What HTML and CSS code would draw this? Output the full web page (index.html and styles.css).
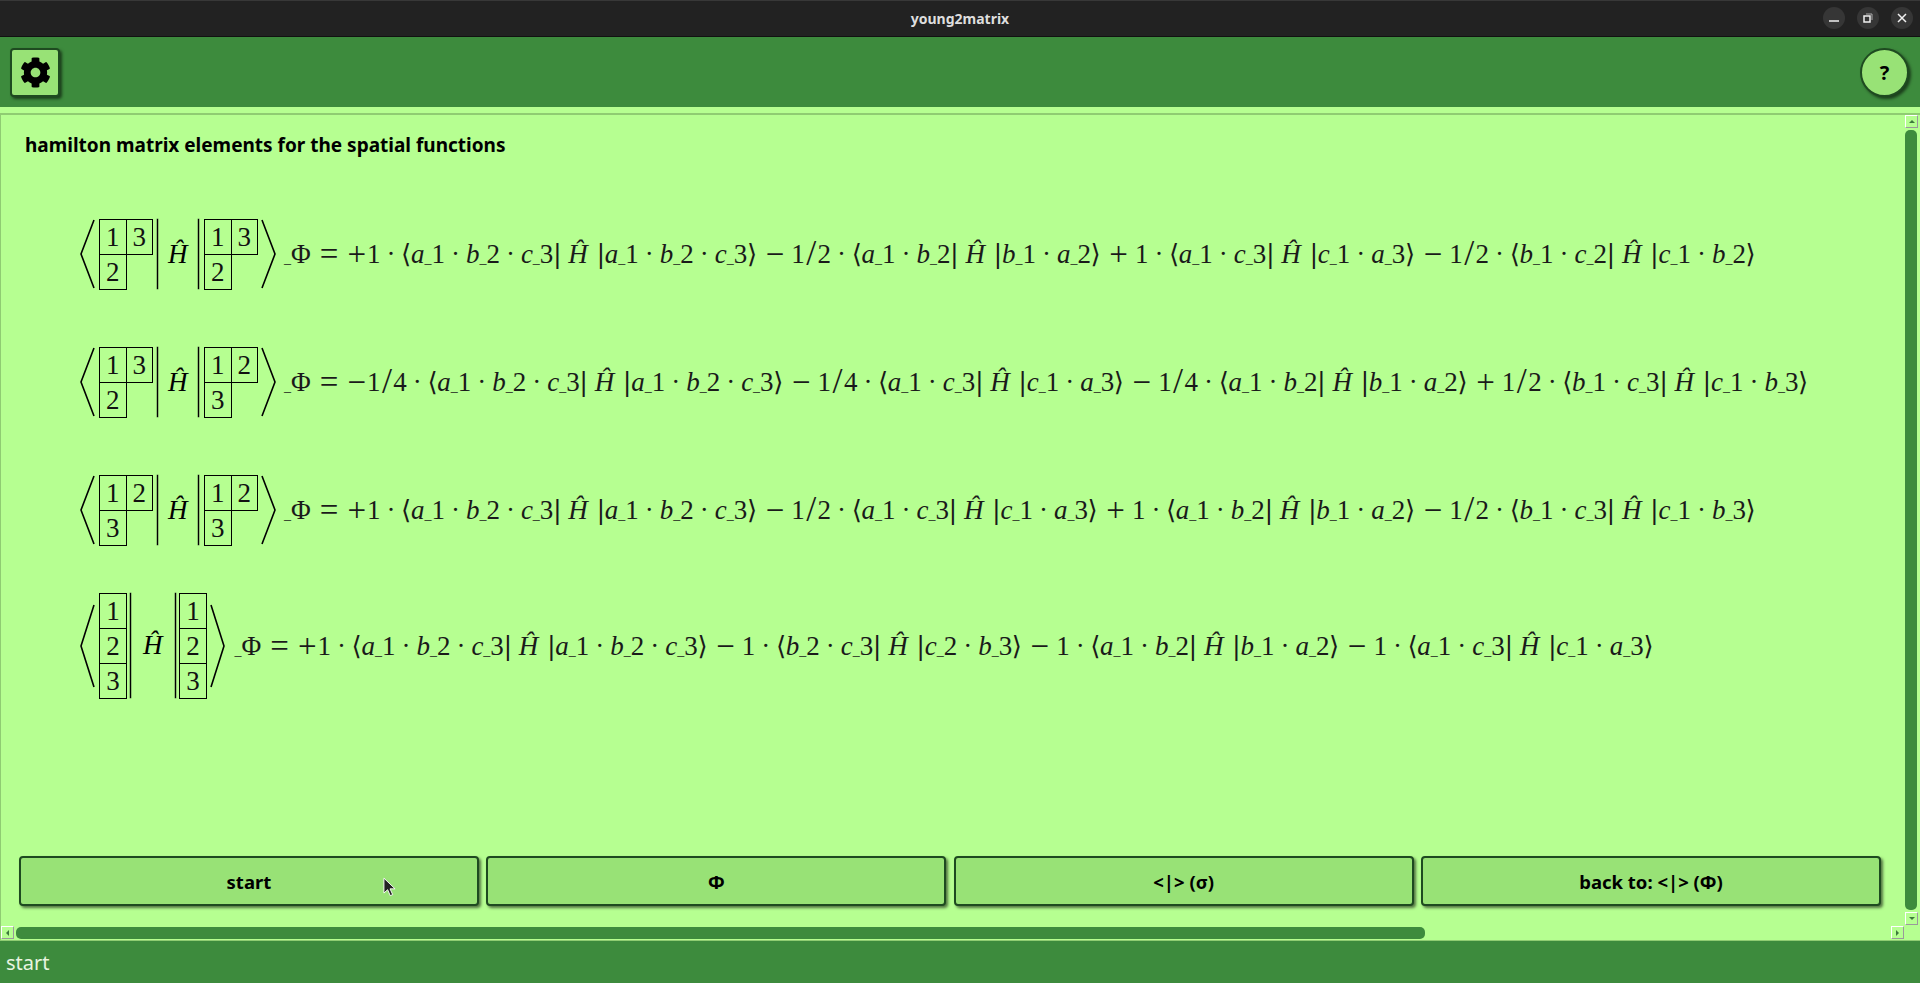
FILE: index.html
```html
<!DOCTYPE html>
<html lang="en">
<head>
<meta charset="utf-8">
<title>young2matrix</title>
<link rel="stylesheet" href="styles.css">
</head>
<body>
<header class="titlebar">
  <span class="app-title">young2matrix</span>
  <div class="win-btns">
    <span class="win-btn"><svg viewBox="0 0 22 22"><path d="M6 14h10" /></svg></span>
    <span class="win-btn"><svg viewBox="0 0 22 22"><rect x="7" y="9" width="6" height="6"/><path class="dim" d="M9 7h6v6"/></svg></span>
    <span class="win-btn"><svg viewBox="0 0 22 22"><path d="M7 7l8 8M15 7l-8 8"/></svg></span>
  </div>
</header>
<div class="toolbar">
  <button class="tool-btn" aria-label="settings"><svg viewBox="0 0 512 512"><path d="M487.4 315.7l-42.6-24.6c4.3-23.2 4.3-47 0-70.2l42.6-24.6c4.9-2.8 7.1-8.6 5.5-14-11.1-35.6-30-67.8-54.7-94.6-3.8-4.1-10-5.1-14.8-2.3L380.8 110c-17.9-15.4-38.5-27.3-60.8-35.1V25.8c0-5.6-3.9-10.5-9.4-11.7-36.7-8.2-74.3-7.8-109.2 0-5.5 1.2-9.4 6.1-9.4 11.7V75c-22.2 7.9-42.8 19.8-60.8 35.1L88.7 85.5c-4.9-2.8-11-1.9-14.8 2.3-24.7 26.7-43.6 58.9-54.7 94.6-1.7 5.4.6 11.2 5.5 14L67.3 221c-4.3 23.2-4.3 47 0 70.2l-42.6 24.6c-4.9 2.8-7.1 8.6-5.5 14 11.1 35.6 30 67.8 54.7 94.6 3.8 4.1 10 5.1 14.8 2.3l42.6-24.6c17.9 15.4 38.5 27.3 60.8 35.1v49.2c0 5.6 3.9 10.5 9.4 11.7 36.7 8.2 74.3 7.8 109.2 0 5.5-1.2 9.4-6.1 9.4-11.7v-49.2c22.2-7.9 42.8-19.8 60.8-35.1l42.6 24.6c4.9 2.8 11 1.9 14.8-2.3 24.7-26.7 43.6-58.9 54.7-94.6 1.5-5.5-.7-11.3-5.6-14.1zM256 336c-44.1 0-80-35.9-80-80s35.9-80 80-80 80 35.9 80 80-35.9 80-80 80z"/></svg></button>
  <button class="help-btn">?</button>
</div>
<main class="panel">
  <div class="view">
    <h1 class="heading">hamilton matrix elements for the spatial functions</h1>

    <div class="eq">
      <svg class="ang" viewBox="0 0 16 70" preserveAspectRatio="none"><path d="M15 1L2 35L15 69"/></svg>
      <div class="tab"><span>1</span><span>3</span><span>2</span></div>
      <span class="bar"></span>
      <i class="big-h">Ĥ</i>
      <span class="bar"></span>
      <div class="tab"><span>1</span><span>3</span><span>2</span></div>
      <svg class="ang" viewBox="0 0 16 70" preserveAspectRatio="none"><path d="M1 1L14 35L1 69"/></svg>
      <p class="math"><u>_</u>Φ<span class="rel">=</span><span class="op lead">+</span>1<span class="dot">·</span><span class="br">⟨</span><i>a</i><u>_</u>1<span class="dot">·</span><i>b</i><u>_</u>2<span class="dot">·</span><i>c</i><u>_</u>3<span class="br">|</span><i class="h">Ĥ</i><span class="br">|</span><i>a</i><u>_</u>1<span class="dot">·</span><i>b</i><u>_</u>2<span class="dot">·</span><i>c</i><u>_</u>3<span class="br">⟩</span><span class="op">−</span>1<span class="sl">/</span>2<span class="dot">·</span><span class="br">⟨</span><i>a</i><u>_</u>1<span class="dot">·</span><i>b</i><u>_</u>2<span class="br">|</span><i class="h">Ĥ</i><span class="br">|</span><i>b</i><u>_</u>1<span class="dot">·</span><i>a</i><u>_</u>2<span class="br">⟩</span><span class="op">+</span>1<span class="dot">·</span><span class="br">⟨</span><i>a</i><u>_</u>1<span class="dot">·</span><i>c</i><u>_</u>3<span class="br">|</span><i class="h">Ĥ</i><span class="br">|</span><i>c</i><u>_</u>1<span class="dot">·</span><i>a</i><u>_</u>3<span class="br">⟩</span><span class="op">−</span>1<span class="sl">/</span>2<span class="dot">·</span><span class="br">⟨</span><i>b</i><u>_</u>1<span class="dot">·</span><i>c</i><u>_</u>2<span class="br">|</span><i class="h">Ĥ</i><span class="br">|</span><i>c</i><u>_</u>1<span class="dot">·</span><i>b</i><u>_</u>2<span class="br">⟩</span></p>
    </div>

    <div class="eq">
      <svg class="ang" viewBox="0 0 16 70" preserveAspectRatio="none"><path d="M15 1L2 35L15 69"/></svg>
      <div class="tab"><span>1</span><span>3</span><span>2</span></div>
      <span class="bar"></span>
      <i class="big-h">Ĥ</i>
      <span class="bar"></span>
      <div class="tab"><span>1</span><span>2</span><span>3</span></div>
      <svg class="ang" viewBox="0 0 16 70" preserveAspectRatio="none"><path d="M1 1L14 35L1 69"/></svg>
      <p class="math"><u>_</u>Φ<span class="rel">=</span><span class="op lead">−</span>1<span class="sl">/</span>4<span class="dot">·</span><span class="br">⟨</span><i>a</i><u>_</u>1<span class="dot">·</span><i>b</i><u>_</u>2<span class="dot">·</span><i>c</i><u>_</u>3<span class="br">|</span><i class="h">Ĥ</i><span class="br">|</span><i>a</i><u>_</u>1<span class="dot">·</span><i>b</i><u>_</u>2<span class="dot">·</span><i>c</i><u>_</u>3<span class="br">⟩</span><span class="op">−</span>1<span class="sl">/</span>4<span class="dot">·</span><span class="br">⟨</span><i>a</i><u>_</u>1<span class="dot">·</span><i>c</i><u>_</u>3<span class="br">|</span><i class="h">Ĥ</i><span class="br">|</span><i>c</i><u>_</u>1<span class="dot">·</span><i>a</i><u>_</u>3<span class="br">⟩</span><span class="op">−</span>1<span class="sl">/</span>4<span class="dot">·</span><span class="br">⟨</span><i>a</i><u>_</u>1<span class="dot">·</span><i>b</i><u>_</u>2<span class="br">|</span><i class="h">Ĥ</i><span class="br">|</span><i>b</i><u>_</u>1<span class="dot">·</span><i>a</i><u>_</u>2<span class="br">⟩</span><span class="op">+</span>1<span class="sl">/</span>2<span class="dot">·</span><span class="br">⟨</span><i>b</i><u>_</u>1<span class="dot">·</span><i>c</i><u>_</u>3<span class="br">|</span><i class="h">Ĥ</i><span class="br">|</span><i>c</i><u>_</u>1<span class="dot">·</span><i>b</i><u>_</u>3<span class="br">⟩</span></p>
    </div>

    <div class="eq">
      <svg class="ang" viewBox="0 0 16 70" preserveAspectRatio="none"><path d="M15 1L2 35L15 69"/></svg>
      <div class="tab"><span>1</span><span>2</span><span>3</span></div>
      <span class="bar"></span>
      <i class="big-h">Ĥ</i>
      <span class="bar"></span>
      <div class="tab"><span>1</span><span>2</span><span>3</span></div>
      <svg class="ang" viewBox="0 0 16 70" preserveAspectRatio="none"><path d="M1 1L14 35L1 69"/></svg>
      <p class="math"><u>_</u>Φ<span class="rel">=</span><span class="op lead">+</span>1<span class="dot">·</span><span class="br">⟨</span><i>a</i><u>_</u>1<span class="dot">·</span><i>b</i><u>_</u>2<span class="dot">·</span><i>c</i><u>_</u>3<span class="br">|</span><i class="h">Ĥ</i><span class="br">|</span><i>a</i><u>_</u>1<span class="dot">·</span><i>b</i><u>_</u>2<span class="dot">·</span><i>c</i><u>_</u>3<span class="br">⟩</span><span class="op">−</span>1<span class="sl">/</span>2<span class="dot">·</span><span class="br">⟨</span><i>a</i><u>_</u>1<span class="dot">·</span><i>c</i><u>_</u>3<span class="br">|</span><i class="h">Ĥ</i><span class="br">|</span><i>c</i><u>_</u>1<span class="dot">·</span><i>a</i><u>_</u>3<span class="br">⟩</span><span class="op">+</span>1<span class="dot">·</span><span class="br">⟨</span><i>a</i><u>_</u>1<span class="dot">·</span><i>b</i><u>_</u>2<span class="br">|</span><i class="h">Ĥ</i><span class="br">|</span><i>b</i><u>_</u>1<span class="dot">·</span><i>a</i><u>_</u>2<span class="br">⟩</span><span class="op">−</span>1<span class="sl">/</span>2<span class="dot">·</span><span class="br">⟨</span><i>b</i><u>_</u>1<span class="dot">·</span><i>c</i><u>_</u>3<span class="br">|</span><i class="h">Ĥ</i><span class="br">|</span><i>c</i><u>_</u>1<span class="dot">·</span><i>b</i><u>_</u>3<span class="br">⟩</span></p>
    </div>

    <div class="eq eq-column">
      <svg class="ang" viewBox="0 0 16 84" preserveAspectRatio="none"><path d="M15 1L2 42L15 83"/></svg>
      <div class="tab tab-col"><span>1</span><span>2</span><span>3</span></div>
      <span class="bar"></span>
      <i class="big-h">Ĥ</i>
      <span class="bar"></span>
      <div class="tab tab-col"><span>1</span><span>2</span><span>3</span></div>
      <svg class="ang" viewBox="0 0 16 84" preserveAspectRatio="none"><path d="M1 1L14 42L1 83"/></svg>
      <p class="math"><u>_</u>Φ<span class="rel">=</span><span class="op lead">+</span>1<span class="dot">·</span><span class="br">⟨</span><i>a</i><u>_</u>1<span class="dot">·</span><i>b</i><u>_</u>2<span class="dot">·</span><i>c</i><u>_</u>3<span class="br">|</span><i class="h">Ĥ</i><span class="br">|</span><i>a</i><u>_</u>1<span class="dot">·</span><i>b</i><u>_</u>2<span class="dot">·</span><i>c</i><u>_</u>3<span class="br">⟩</span><span class="op">−</span>1<span class="dot">·</span><span class="br">⟨</span><i>b</i><u>_</u>2<span class="dot">·</span><i>c</i><u>_</u>3<span class="br">|</span><i class="h">Ĥ</i><span class="br">|</span><i>c</i><u>_</u>2<span class="dot">·</span><i>b</i><u>_</u>3<span class="br">⟩</span><span class="op">−</span>1<span class="dot">·</span><span class="br">⟨</span><i>a</i><u>_</u>1<span class="dot">·</span><i>b</i><u>_</u>2<span class="br">|</span><i class="h">Ĥ</i><span class="br">|</span><i>b</i><u>_</u>1<span class="dot">·</span><i>a</i><u>_</u>2<span class="br">⟩</span><span class="op">−</span>1<span class="dot">·</span><span class="br">⟨</span><i>a</i><u>_</u>1<span class="dot">·</span><i>c</i><u>_</u>3<span class="br">|</span><i class="h">Ĥ</i><span class="br">|</span><i>c</i><u>_</u>1<span class="dot">·</span><i>a</i><u>_</u>3<span class="br">⟩</span></p>
    </div>

    <div class="actions">
      <button class="act">start</button>
      <button class="act">Φ</button>
      <button class="act">&lt;|&gt; (σ)</button>
      <button class="act">back to: &lt;|&gt; (Φ)</button>
    </div>
  </div>
  <div class="vscroll">
    <span class="sb-btn"><span class="arrow up"></span></span>
    <span class="thumb"></span>
    <span class="sb-btn"><span class="arrow down"></span></span>
  </div>
  <div class="hscroll">
    <span class="sb-btn"><span class="arrow left"></span></span>
    <span class="thumb thumb-h"></span>
    <span class="sb-btn sb-end"><span class="arrow right"></span></span>
  </div>
</main>
<footer class="statusbar">start</footer>
<svg class="cursor" viewBox="0 0 14 21"><path d="M1 1v16l4-3.6 2.8 6.4 2.6-1.1-2.8-6.2h5.4z"/></svg>
</body>
</html>
```
FILE: styles.css
```css
* { box-sizing: border-box; }
html, body { margin: 0; height: 100%; }
body {
  display: flex;
  flex-direction: column;
  height: 983px;
  overflow: hidden;
  background: #b6ff91;
  font-family: "Noto Sans", "Open Sans", sans-serif;
  color: #000;
}

.titlebar {
  flex: 0 0 37px;
  display: flex;
  align-items: center;
  justify-content: center;
  position: relative;
  background: #222222;
  border-top: 1px solid #383838;
  border-bottom: 1px solid #111;
}
.app-title { color: #dedede; font-size: 14px; font-weight: 700; }
.win-btns {
  position: absolute;
  right: 7px;
  top: 6px;
  display: flex;
  gap: 12px;
}
.win-btn { width: 22px; height: 22px; border-radius: 50%; background: #363636; display: block; }
.win-btn svg { width: 22px; height: 22px; display: block; fill: none; stroke: #f0f0f0; stroke-width: 1.5; }
.win-btn .dim { stroke: #aaa; stroke-width: 1; }

.toolbar {
  flex: 0 0 70px;
  display: flex;
  justify-content: space-between;
  align-items: center;
  padding: 0 11px 0 10px;
  background: #3d8b3d;
}
.tool-btn {
  width: 50px;
  height: 49px;
  padding: 0;
  display: flex;
  align-items: center;
  justify-content: center;
  background: #98e276;
  border: 2px solid #1e4a20;
  border-radius: 4px;
  box-shadow: 2px 2px 3px rgba(0,0,0,.55);
}
.tool-btn svg { width: 31px; height: 31px; fill: #000; }
.help-btn {
  width: 49px;
  height: 49px;
  padding: 0;
  background: #98e276;
  border: 2px solid #1e4a20;
  border-radius: 50%;
  font: 700 20px "Noto Sans", sans-serif;
  color: #000;
  box-shadow: 2px 2px 3px rgba(0,0,0,.55);
}

.panel {
  flex: 1 1 auto;
  min-height: 0;
  margin-top: 6px;
  padding-bottom: 1px;
  display: grid;
  grid-template-columns: minmax(0, 1fr) 16px;
  grid-template-rows: minmax(0, 1fr) 14px;
  border-top: 2px solid #8fcc72;
  border-left: 1px solid #8fcc72;
  border-bottom: 1px solid #8fcc72;
}
.view {
  display: flex;
  flex-direction: column;
  padding: 17px 23px 19px 18px;
  min-width: 0;
}
.heading {
  margin: 0 0 0 6px;
  font-size: 19px;
  line-height: 26px;
  font-weight: 700;
}

.eq {
  display: flex;
  align-items: center;
  height: 70px;
  margin-top: 58px;
  padding-left: 60px;
  font-family: "Liberation Serif", serif;
}
.eq:first-of-type { margin-top: 61px; }
.eq-column { height: 105px; margin-top: 48px; }

.ang { width: 16px; height: 70px; flex: none; fill: none; stroke: #000; stroke-width: 1.6; }
.eq-column .ang { height: 84px; }

.tab {
  flex: none;
  display: grid;
  grid-template-columns: repeat(2, 26.5px);
  grid-auto-rows: 35px;
  margin: 0 2px 0 4px;
}
.tab span {
  display: flex;
  align-items: center;
  justify-content: center;
  border: 1px solid #000;
  margin: 0 -1px -1px 0;
  font-size: 27px;
  color: #111;
}
.tab-col { grid-template-columns: 27px; }

.bar { flex: none; align-self: stretch; width: 1px; background: #000; margin-left: 3px; box-shadow: 0 0 0 .3px #333; }
.big-h { flex: none; font-size: 27px; margin: 0 6px 0 10px; width: 21px; }
.eq .bar + .tab { margin-left: 5px; }
.eq .bar + .tab + .ang { margin-left: 2px; }
.eq-column .bar { margin-left: 2px; }
.eq-column .big-h { margin: 0 9px 0 12px; }
.eq-column .bar + .tab { margin-left: 3px; }

.math {
  margin: 0 0 0 7px;
  padding-top: 5px;
  font-size: 27px;
  line-height: 40px;
  white-space: nowrap;
  color: #1a1a1a;
}
.eq-column .math { margin-left: 8.5px; }
.math i { font-style: italic; }
.math u { text-decoration: none; font-size: 14px; }
.dot { margin: 0 6px; }
.op, .rel { font-size: 33px; vertical-align: -2px; line-height: 1; }
.op { margin: 0 7px 0 9px; }
.op.lead { margin: 0 1px 0 0; }
.rel { margin: 0 9px 0 9px; }
.sl { font-size: 36px; vertical-align: -2px; line-height: 1; margin: 0 1.4px; }
.br { font-family: "DejaVu Serif", serif; font-size: 26px; line-height: 1; margin: 0 -.4px; }
.h { margin: 0 9px 0 7px; }

.actions {
  margin-top: auto;
  display: grid;
  grid-template-columns: repeat(4, 1fr);
  gap: 7.5px;
}
.act {
  height: 50px;
  background: #98e276;
  border: 2px solid #1e4a20;
  border-radius: 4px;
  font: 700 18.5px "Noto Sans", sans-serif;
  color: #000;
  box-shadow: 2px 2px 3px rgba(0,0,0,.55);
}

.vscroll { display: flex; flex-direction: column; gap: 2px; padding: 0 2px 0 1px; grid-row: 1; grid-column: 2; }
.hscroll { display: flex; gap: 2px; padding-top: 1px; padding-right: 0; grid-row: 2; grid-column: 1; }
.sb-btn {
  flex: 0 0 13px;
  width: 13px;
  height: 13px;
  display: flex;
  align-items: center;
  justify-content: center;
  background: #b6ff91;
  border: 1px solid;
  border-color: #fff #9a9a9a #9a9a9a #fff;
}
.thumb { flex: 1 1 auto; width: 12px; border-radius: 5px; background: #3d8b3d; }
.thumb-h { flex: 0 0 1409px; width: auto; height: 12px; margin-top: 1px; }
.sb-end { margin-left: auto; }
.arrow { width: 0; height: 0; border: 3px solid transparent; }
.arrow.up { border-bottom-color: #3d7a3d; margin-top: -3px; }
.arrow.down { border-top-color: #3d7a3d; margin-top: 3px; }
.arrow.left { border-right-color: #3d7a3d; margin-left: -3px; }
.arrow.right { border-left-color: #3d7a3d; margin-left: 3px; }

.statusbar {
  flex: 0 0 42px;
  display: flex;
  align-items: center;
  padding-left: 6px;
  background: #3d8b3d;
  color: #e8f5e0;
  font-size: 20px;
}

.cursor {
  position: absolute;
  left: 383px;
  top: 877px;
  width: 13px;
  height: 20px;
  fill: #222;
  stroke: #fff;
  stroke-width: 1;
}
```
